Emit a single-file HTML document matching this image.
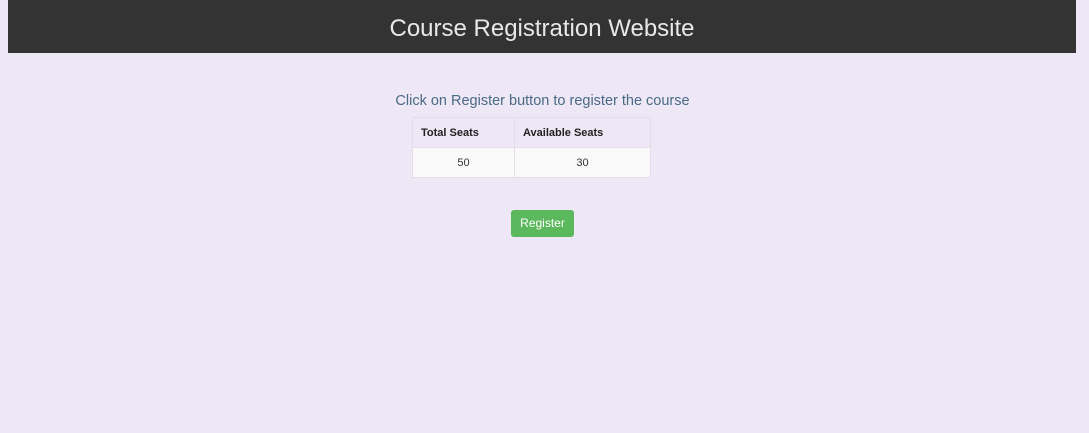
<!DOCTYPE html>
<html><head><style>
body{margin:0;background:#ede7f6;font-family:"Liberation Sans",Arial,sans-serif;width:1089px;height:433px;overflow:hidden;position:relative}
.hdr{position:absolute;left:8px;top:0;width:1068px;height:53px;background:#333;color:#e8e8e8;font-size:24px;text-align:center;line-height:57px}
.sub{position:absolute;left:0;width:1085px;top:93px;text-align:center;color:#4a6a85;font-size:14.5px}
table{position:absolute;left:412px;top:117px;border-collapse:collapse;font-size:11px;color:#333}
td,th{border:1px solid #e2dde8;height:29px;padding:0 8px}
th{text-align:left;font-weight:bold;color:#222}
td{background:#f9f9f9;text-align:center}
.b{position:absolute;left:511px;top:210px;width:63px;height:27px;background:#5cb85c;border-radius:3px;color:#fff;font-size:12px;text-align:center;line-height:27px}
</style></head><body>
<div class="hdr">Course Registration Website</div>
<div class="sub">Click on Register button to register the course</div>
<table><tr><th style="width:85px">Total Seats</th><th style="width:119px">Available Seats</th></tr>
<tr><td>50</td><td>30</td></tr></table>
<div class="b">Register</div>
</body></html>
